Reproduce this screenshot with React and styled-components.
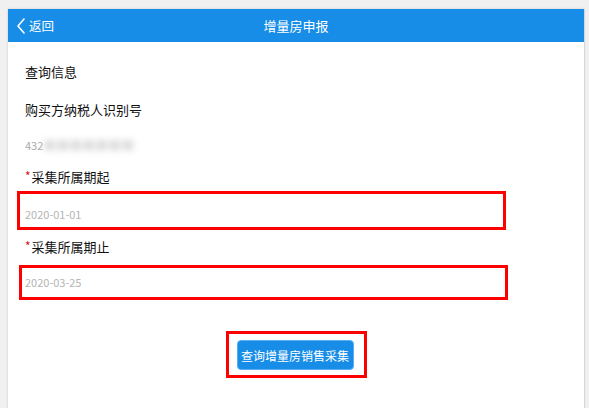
import styled, { createGlobalStyle } from "styled-components";

const GlobalStyle = createGlobalStyle`
  html, body {
    margin: 0;
    padding: 0;
    background: #f0f0f0;
    font-family: "Noto Sans CJK SC", "Noto Sans", sans-serif;
  }
`;

const Page = styled.div`
  padding: 9px 5px 0 8px;
  height: 408px;
  box-sizing: border-box;
  overflow: hidden;
`;

const Frame = styled.div`
  width: 576px;
  height: 420px;
  background: #fff;
  box-shadow: 0 0 2px rgba(0, 0, 0, 0.18), 1px 0 0 #e2e2e2;
`;

const Header = styled.div`
  position: relative;
  height: 33px;
  background: #178de7;
  color: #fff;
  display: flex;
  align-items: center;
  justify-content: center;
`;

const Back = styled.div`
  position: absolute;
  left: 8px;
  top: 0;
  height: 33px;
  display: flex;
  align-items: center;
  gap: 2px;
  font-size: 12.5px;
  cursor: pointer;
`;

const Title = styled.h1`
  margin: 0;
  font-size: 13px;
  font-weight: 400;
  line-height: 20px;
`;

const Body = styled.div`
  padding: 0 0 0 17px;
  display: flex;
  flex-direction: column;
`;

const Label = styled.div`
  margin-top: ${(p) => p.$top}px;
  font-size: 13px;
  line-height: 20px;
  color: #111;
`;

const Star = styled.span`
  color: #e01010;
  font-size: 12px;
  margin-right: 1px;
  position: relative;
  top: -1px;
`;

const Value = styled.div`
  margin-top: ${(p) => p.$top}px;
  font-size: 11px;
  line-height: 16px;
  color: #aaa;
  display: flex;
`;

const Blurred = styled.span`
  filter: blur(3px);
  color: #dcdcdc;
  font-size: 13px;
  letter-spacing: 0;
`;

const Field = styled.div`
  margin-top: ${(p) => p.$top}px;
  margin-left: ${(p) => p.$left}px;
  width: ${(p) => p.$width}px;
  height: ${(p) => p.$height}px;
  box-sizing: border-box;
  border: 3px solid #ff0000;
  padding: ${(p) => p.$pad}px 0 0 ${(p) => 5 - p.$left - 8}px;
  font-size: 11px;
  line-height: 16px;
  color: #b4b4b4;
`;

const Actions = styled.div`
  margin-top: 31px;
  display: flex;
  justify-content: center;
  padding-right: 17px;
`;

const Highlight = styled.div`
  border: 3px solid #ff0000;
  padding: 6px 10px 5px 8px;
`;

const Button = styled.button`
  width: 117px;
  height: 30px;
  border: 1px solid #5aaef0;
  border-radius: 4px;
  background: #178de7;
  color: #fff;
  font-family: inherit;
  font-size: 12px;
  padding: 0;
  cursor: pointer;
`;

export default function App() {
  return (
    <>
      <GlobalStyle />
      <Page>
        <Frame>
          <Header>
            <Back>
              <svg width="11" height="16" viewBox="0 0 11 16">
                <polyline
                  points="8,1 2,8 8,15"
                  fill="none"
                  stroke="#fff"
                  strokeWidth="1.6"
                  strokeLinecap="round"
                  strokeLinejoin="round"
                />
              </svg>
              <span>返回</span>
            </Back>
            <Title>增量房申报</Title>
          </Header>
          <Body>
            <Label $top={20}>查询信息</Label>
            <Label $top={18}>购买方纳税人识别号</Label>
            <Value $top={17}>
              432<Blurred>■■■■■■■</Blurred>
            </Value>
            <Label $top={14}>
              <Star>*</Star>采集所属期起
            </Label>
            <Field $top={4} $left={-8} $width={489} $height={39} $pad={12}>
              2020-01-01
            </Field>
            <Label $top={7}>
              <Star>*</Star>采集所属期止
            </Label>
            <Field $top={8} $left={-6} $width={489} $height={35} $pad={6}>
              2020-03-25
            </Field>
            <Actions>
              <Highlight>
                <Button>查询增量房销售采集</Button>
              </Highlight>
            </Actions>
          </Body>
        </Frame>
      </Page>
    </>
  );
}
